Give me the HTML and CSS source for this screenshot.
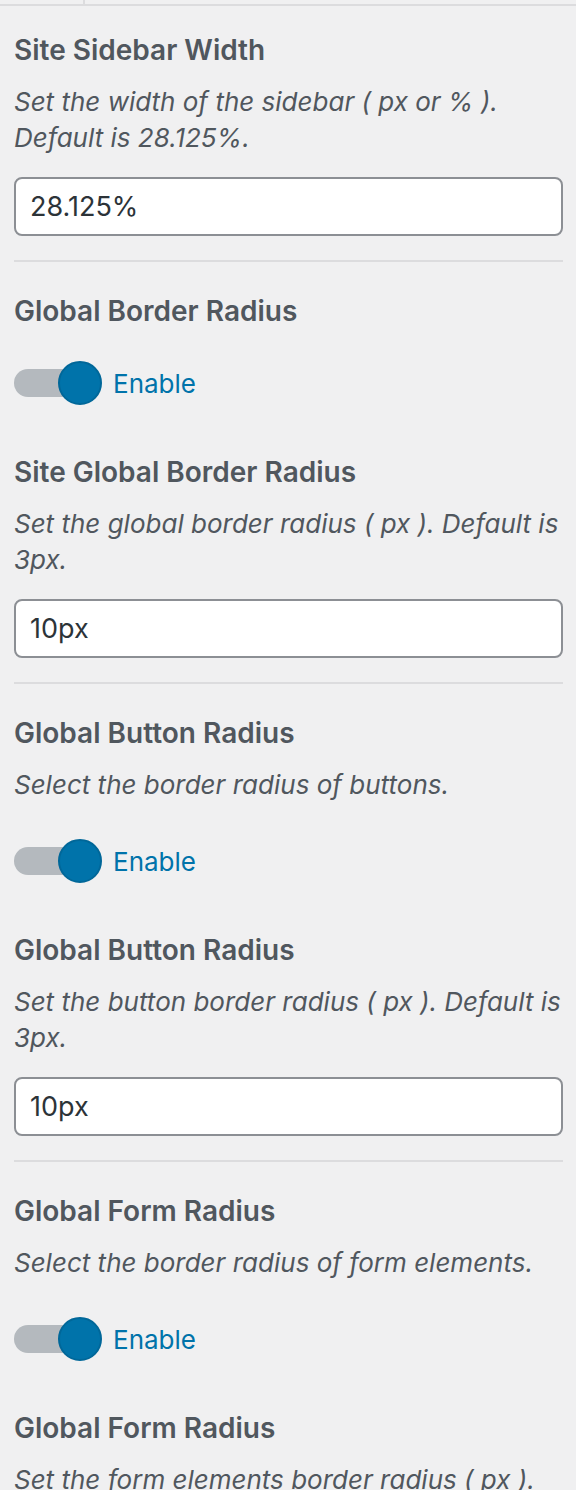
FILE: index.html
```html
<!DOCTYPE html>
<html>
<head>
<meta charset="utf-8">
<link rel="stylesheet" href="styles.css">
</head>
<body>
<div class="tabs"><div class="tab"></div><div class="tab-rest"></div></div>
<div class="panel">
  <div class="control">
    <h3 class="title">Site Sidebar Width</h3>
    <p class="desc">Set the width of the sidebar ( px or % ). Default is 28.125%.</p>
    <div class="input">28.125%</div>
  </div>
  <hr class="sep">
  <div class="control">
    <h3 class="title">Global Border Radius</h3>
    <div class="toggle"><span class="track"><span class="knob"></span></span><span class="toggle-label">Enable</span></div>
  </div>
  <div class="control gap">
    <h3 class="title">Site Global Border Radius</h3>
    <p class="desc">Set the global border radius ( px ). Default is 3px.</p>
    <div class="input">10px</div>
  </div>
  <hr class="sep">
  <div class="control">
    <h3 class="title">Global Button Radius</h3>
    <p class="desc">Select the border radius of buttons.</p>
    <div class="toggle"><span class="track"><span class="knob"></span></span><span class="toggle-label">Enable</span></div>
  </div>
  <div class="control gap">
    <h3 class="title">Global Button Radius</h3>
    <p class="desc">Set the button border radius ( px ). Default is 3px.</p>
    <div class="input">10px</div>
  </div>
  <hr class="sep">
  <div class="control">
    <h3 class="title">Global Form Radius</h3>
    <p class="desc">Select the border radius of form elements.</p>
    <div class="toggle"><span class="track"><span class="knob"></span></span><span class="toggle-label">Enable</span></div>
  </div>
  <div class="control gap">
    <h3 class="title">Global Form Radius</h3>
    <p class="desc">Set the form elements border radius ( px ).</p>
  </div>
</div>
</body>
</html>
```
FILE: styles.css
```css
html, body {
  margin: 0;
  padding: 0;
  background: #f0f0f1;
}
body {
  font-family: Inter, "Liberation Sans", sans-serif;
  color: #50575e;
  overflow: hidden;
}
.tabs {
  display: flex;
  height: 4px;
  border-bottom: 2px solid #dcdcde;
}
.tab {
  width: 83px;
  border-right: 2px solid #dcdcde;
}
.panel {
  padding: 26px 13px 0 14px;
}
.title {
  margin: 0;
  font-size: 28px;
  line-height: 36px;
  font-weight: 600;
  color: #50575e;
}
.desc {
  margin: 16px 0 0;
  font-size: 26px;
  line-height: 36px;
  font-style: italic;
  color: #50575e;
}
.input {
  margin-top: 21px;
  height: 59px;
  box-sizing: border-box;
  border: 2px solid #8c8f94;
  border-radius: 8px;
  background: #fff;
  padding: 0 14px;
  display: flex;
  align-items: center;
  font-size: 27px;
  color: #2c3338;
}
.sep {
  margin: 24px 0 31px;
  border: 0;
  height: 2px;
  background: #dcdcde;
}
.toggle {
  margin-top: 32px;
  display: flex;
  align-items: center;
  height: 44px;
}
.desc + .toggle {
  margin-top: 36px;
}
.track {
  position: relative;
  width: 76px;
  height: 28px;
  border-radius: 14px;
  background: #b4b9be;
}
.knob {
  position: absolute;
  left: 44px;
  top: -8px;
  width: 44px;
  height: 44px;
  box-sizing: border-box;
  border-radius: 50%;
  background: #0073aa;
  border: 2px solid #006799;
}
.toggle-label {
  margin-left: 23px;
  font-size: 26px;
  color: #0073aa;
}
.gap {
  margin-top: 49px;
}
```
